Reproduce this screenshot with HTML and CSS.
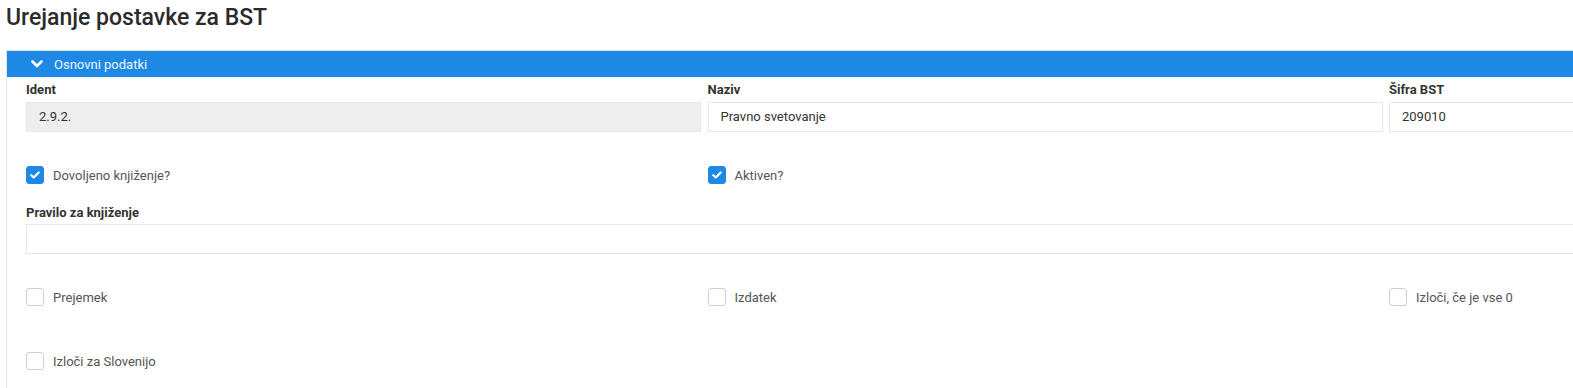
FILE: index.html
```html
<!DOCTYPE html>
<html lang="sl">
<head>
<meta charset="utf-8">
<title>Urejanje postavke za BST</title>
<link rel="stylesheet" href="styles.css">
</head>
<body>
<h1 class="page-title">Urejanje postavke za BST</h1>
<section class="panel">
  <div class="panel-head">
    <svg class="chev" width="12" height="8" viewBox="0 0 12 8"><path d="M1.5 1.5 L6 6 L10.5 1.5" fill="none" stroke="#fff" stroke-width="2.6" stroke-linecap="round" stroke-linejoin="round"/></svg>
    <span>Osnovni podatki</span>
  </div>
  <div class="panel-body">
    <div class="grid3">
      <div class="field">
        <label class="lbl">Ident</label>
        <div class="input readonly">2.9.2.</div>
      </div>
      <div class="field">
        <label class="lbl">Naziv</label>
        <div class="input">Pravno svetovanje</div>
      </div>
      <div class="field">
        <label class="lbl">Šifra BST</label>
        <div class="input">209010</div>
      </div>
    </div>

    <div class="grid3 check-row first">
      <div class="check"><span class="box on"><svg width="10" height="8" viewBox="0 0 10 8"><path d="M1.3 4.2 L3.8 6.5 L8.7 1.5" fill="none" stroke="#fff" stroke-width="2.2" stroke-linecap="round" stroke-linejoin="round"/></svg></span><span class="ctext">Dovoljeno knjiženje?</span></div>
      <div class="check"><span class="box on"><svg width="10" height="8" viewBox="0 0 10 8"><path d="M1.3 4.2 L3.8 6.5 L8.7 1.5" fill="none" stroke="#fff" stroke-width="2.2" stroke-linecap="round" stroke-linejoin="round"/></svg></span><span class="ctext">Aktiven?</span></div>
    </div>

    <div class="field wide">
      <label class="lbl">Pravilo za knjiženje</label>
      <div class="input"></div>
    </div>

    <div class="grid3 check-row">
      <div class="check"><span class="box"></span><span class="ctext">Prejemek</span></div>
      <div class="check"><span class="box"></span><span class="ctext">Izdatek</span></div>
      <div class="check"><span class="box"></span><span class="ctext">Izloči, če je vse 0</span></div>
    </div>

    <div class="grid3 check-row last">
      <div class="check"><span class="box"></span><span class="ctext">Izloči za Slovenijo</span></div>
    </div>
  </div>
</section>
</body>
</html>
```

FILE: styles.css
```css
html, body {
  margin: 0;
  padding: 0;
  overflow: hidden;
  background: #fff;
}
body {
  font-family: Roboto, "Liberation Sans", sans-serif;
  color: #333;
  width: 2100px;
}
.page-title {
  margin: 0;
  padding: 3px 0 0 6px;
  font-size: 23px;
  font-weight: 500;
  line-height: 30px;
  color: #2b2b2b;
  height: 46px;
  box-sizing: border-box;
}
.panel {
  margin: 4px 0 0 6px;
  border: 1px solid #e3e8ee;
  border-top: none;
  width: 2060px;
}
.panel-head {
  height: 27px;
  background: #1e88e5;
  border-top: 1px solid #d7e4f0;
  display: flex;
  align-items: center;
  padding-left: 24px;
  color: #eef5fd;
  font-size: 13px;
  box-sizing: border-box;
}
.chev { margin-right: 11px; }
.panel-body {
  padding: 6px 19px 40px 19px;
}
.grid3 {
  display: grid;
  grid-template-columns: 675px 675px 675px;
  column-gap: 6.5px;
}
.lbl {
  display: block;
  font-size: 13px;
  font-weight: 700;
  line-height: 14px;
  color: #333;
  margin-bottom: 5px;
}
.input {
  height: 30px;
  box-sizing: border-box;
  border: 1px solid #e3e8ee;
  background: #fff;
  font-size: 13px;
  line-height: 28px;
  padding-left: 12px;
  color: #333;
}
.input.readonly { background: #eeeeee; }
.field.wide { margin-top: 22px; }
.field.wide .lbl { margin-bottom: 4px; }
.field.wide .input { width: 2020px; }
.check-row { margin-top: 34px; }
.check-row.last { margin-top: 46px; }
.check {
  display: flex;
  align-items: center;
  height: 18px;
}
.box {
  width: 18px;
  height: 18px;
  box-sizing: border-box;
  border: 1px solid #cfcfcf;
  border-radius: 3px;
  background: #fff;
  display: flex;
  align-items: center;
  justify-content: center;
  margin-right: 9px;
}
.box.on {
  background: #1e88e5;
  border-color: #1e88e5;
}
.ctext {
  font-size: 13px;
  color: #555;
}
```
